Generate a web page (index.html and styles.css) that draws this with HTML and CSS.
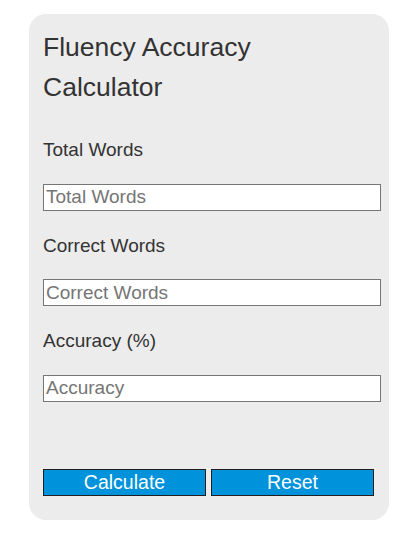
FILE: index.html
```html
<!DOCTYPE html>
<html lang="en">
<head>
<meta charset="utf-8">
<title>Fluency Accuracy Calculator</title>
<link rel="stylesheet" href="styles.css">
</head>
<body>
<div class="card">
  <h2 class="title">Fluency Accuracy Calculator</h2>
  <div class="field">
    <label class="label" for="total">Total Words</label>
    <input class="input" id="total" type="text" placeholder="Total Words">
  </div>
  <div class="field">
    <label class="label" for="correct">Correct Words</label>
    <input class="input" id="correct" type="text" placeholder="Correct Words">
  </div>
  <div class="field">
    <label class="label" for="acc">Accuracy (%)</label>
    <input class="input" id="acc" type="text" placeholder="Accuracy">
  </div>
  <div class="buttons">
    <button class="btn" type="button">Calculate</button>
    <button class="btn" type="button">Reset</button>
  </div>
</div>
</body>
</html>
```

FILE: styles.css
```css
html, body {
  margin: 0;
  padding: 0;
  background: #ffffff;
}
body {
  font-family: "Liberation Sans", Arial, sans-serif;
  color: #333333;
}
.card {
  box-sizing: border-box;
  width: 360px;
  margin: 14px 0 0 29px;
  padding: 13px 8px 24px 14px;
  background: #ececec;
  border-radius: 17px;
  display: flex;
  flex-direction: column;
}
.title {
  margin: 0;
  font-size: 26.5px;
  font-weight: normal;
  line-height: 40px;
  width: 240px;
}
.field {
  display: flex;
  flex-direction: column;
  margin-top: 23px;
}
.field:first-of-type {
  margin-top: 31px;
}
.label {
  font-size: 19px;
  line-height: 24px;
  margin-bottom: 21.5px;
}
.input {
  box-sizing: border-box;
  width: 338px;
  height: 27px;
  margin: 0;
  padding: 0 2px;
  border: 1px solid #767676;
  border-radius: 0;
  background: #ffffff;
  font-family: "Liberation Sans", Arial, sans-serif;
  font-size: 19px;
  color: #333333;
  outline: none;
}
.input::placeholder {
  color: #757575;
  opacity: 1;
}
.buttons {
  display: flex;
  gap: 5px;
  margin-top: 67px;
}
.btn {
  box-sizing: border-box;
  width: 163px;
  height: 27px;
  margin: 0;
  padding: 0;
  border: 1px solid #1f1f1f;
  border-radius: 0;
  background: #0093dc;
  color: #ffffff;
  font-family: "Liberation Sans", Arial, sans-serif;
  font-size: 19.5px;
  line-height: 25px;
  cursor: pointer;
}
```
